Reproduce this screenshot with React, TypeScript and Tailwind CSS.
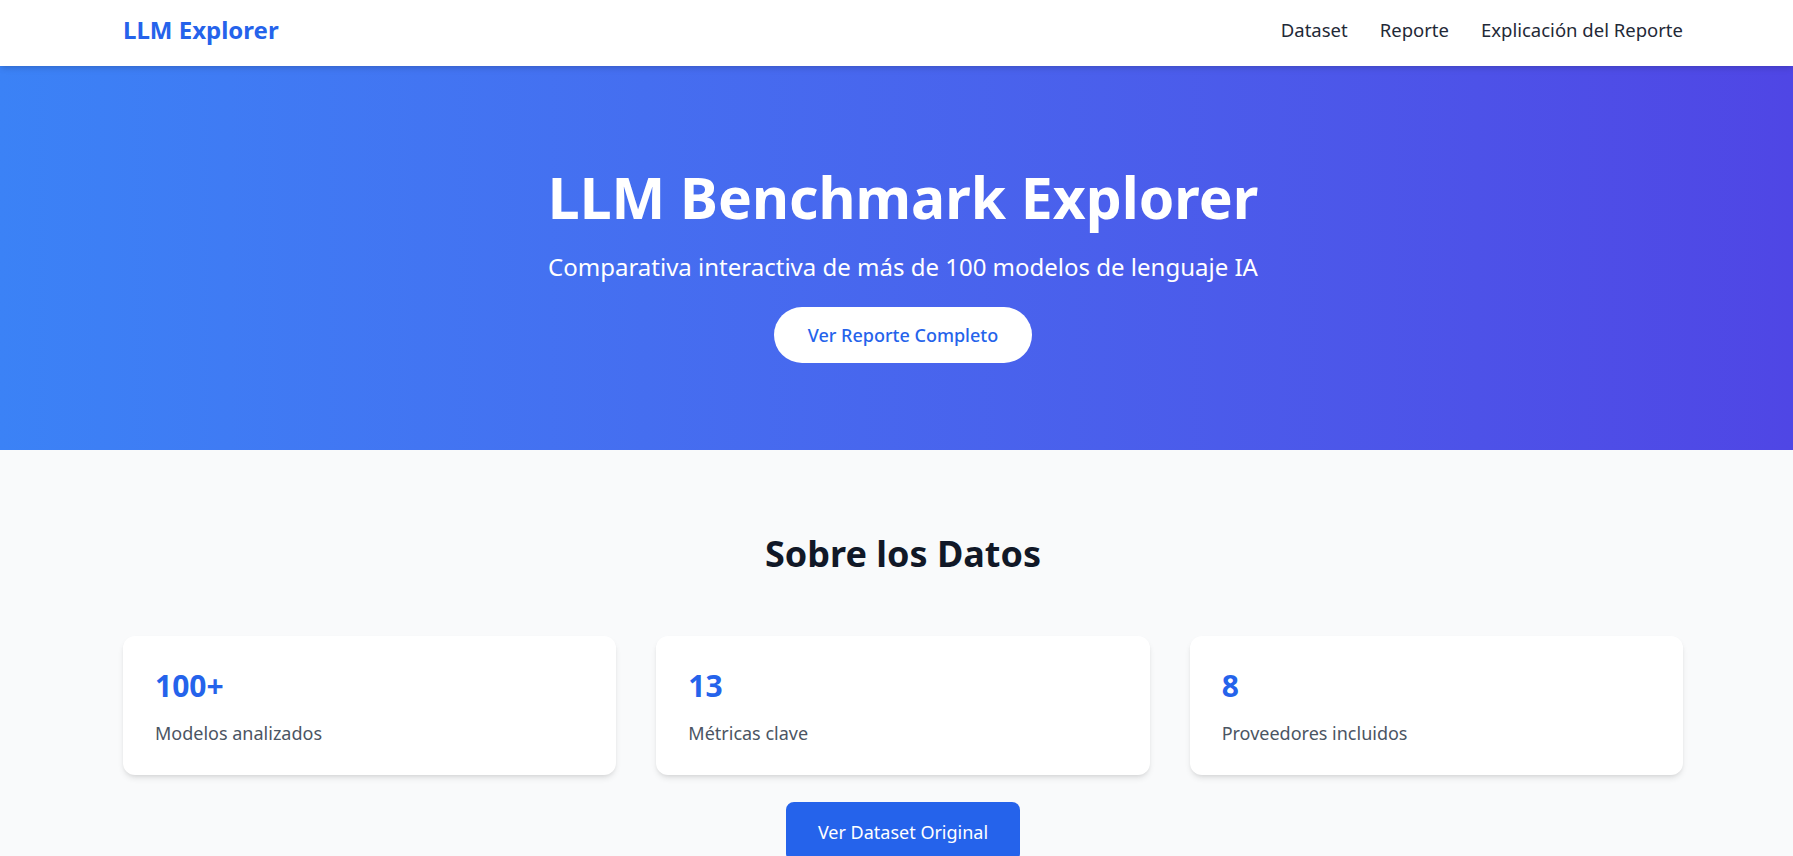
import React from "react";

export default function App(): JSX.Element {
  // Stats shown in the "Sobre los Datos" cards
  const stats = [
    { value: "100+", label: "Modelos analizados" },
    { value: "13", label: "Métricas clave" },
    { value: "8", label: "Proveedores incluidos" },
  ];

  const links = ["Dataset", "Reporte", "Explicación del Reporte"];

  return (
    <div className="min-h-screen bg-gray-50 [font-family:'Segoe_UI','Noto_Sans',sans-serif]">
      {/* Navbar */}
      <nav className="bg-white shadow-md relative z-10">
        <div className="flex items-center justify-between h-[66px] pb-[7px] pl-[123px] pr-[110px]">
          <a href="#" className="text-2xl font-bold text-[#2563eb]">
            LLM Explorer
          </a>
          <div className="flex items-center gap-8">
            {links.map((link) => (
              <a key={link} href="#" className="text-[18.5px] text-[#1f2937]">
                {link}
              </a>
            ))}
          </div>
        </div>
      </nav>

      {/* Hero */}
      <section className="bg-linear-to-r from-[#3b82f6] to-[#4f46e5] text-white">
        <div className="flex flex-col items-center text-center pt-[101px] pb-[87px] pl-[123px] pr-[110px]">
          <h1 className="text-[57px] font-bold leading-[60px] mb-6">
            LLM Benchmark Explorer
          </h1>
          <p className="text-2xl leading-8 mb-6">
            Comparativa interactiva de más de 100 modelos de lenguaje IA
          </p>
          <a
            href="#"
            className="flex items-center h-14 px-[34px] bg-white text-[#2563eb] text-lg font-medium rounded-full"
          >
            Ver Reporte Completo
          </a>
        </div>
      </section>

      {/* About the data */}
      <section className="pt-[84px] pb-16 pl-[123px] pr-[110px]">
        <h2 className="text-4xl font-bold text-[#111827] text-center mb-[62px]">
          Sobre los Datos
        </h2>
        <div className="grid grid-cols-3 gap-10">
          {stats.map((stat) => (
            <div key={stat.label} className="bg-white rounded-xl shadow-md px-8 pt-8 pb-7">
              <p className="text-3xl font-bold text-[#2563eb] mb-[15px]">{stat.value}</p>
              <p className="text-lg text-[#4b5563]">{stat.label}</p>
            </div>
          ))}
        </div>
        <div className="flex justify-center mt-[27px]">
          <a
            href="#"
            className="px-8 py-4 bg-[#2563eb] text-white text-lg rounded-lg"
          >
            Ver Dataset Original
          </a>
        </div>
      </section>
    </div>
  );
}
